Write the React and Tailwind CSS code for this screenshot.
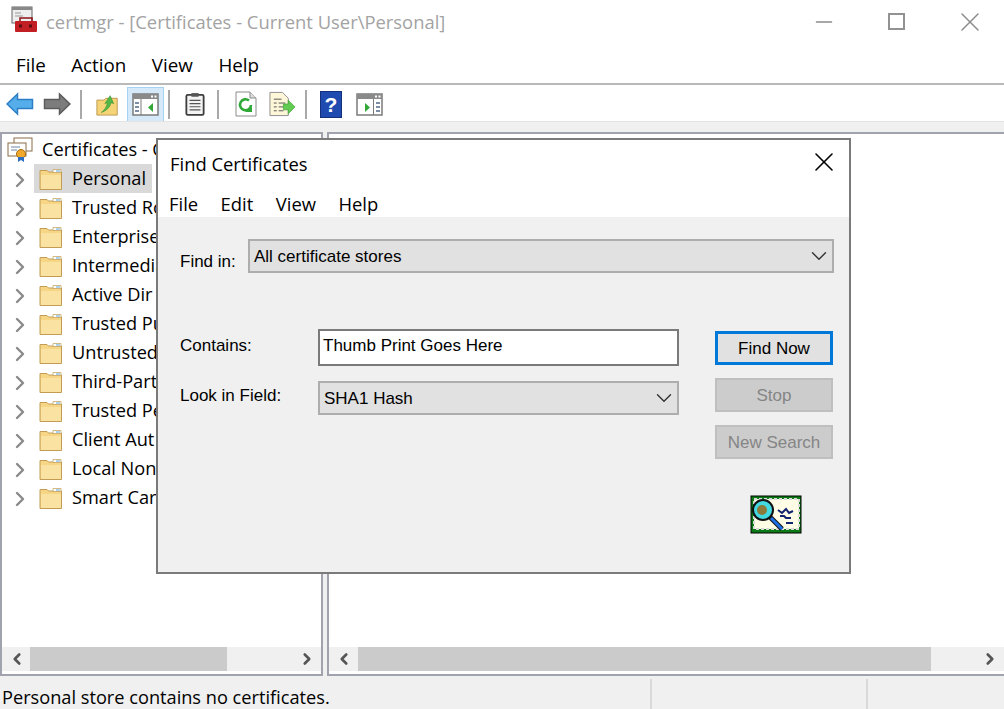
import React from "react";
import { ChevronRight, ChevronLeft, ChevronDown, X, Minus } from "lucide-react";

const uiFont = "font-['Open_Sans','Noto_Sans',sans-serif]";
const dlgFont = "font-['Liberation_Sans',Arial,sans-serif]";

const stores = ["Personal", "Trusted Ro", "Enterprise", "Intermedia", "Active Dir", "Trusted Pu", "Untrusted", "Third-Part", "Trusted Pe", "Client Aut", "Local Non", "Smart Car"];

function Folder() {
  return (
    <svg width="24" height="24" viewBox="0 0 24 24" className="shrink-0">
      <path d="M1 3.500h7l1.500 1.500H22.500v17.500H1z" fill="#f6d685" stroke="#c29c55" />
      <path d="M2 8h20v14H2z" fill="#fae3a2" />
      <path d="M14 2.500h8v3h-8z" fill="#fff" stroke="#c29c55" strokeWidth=".7" />
      <path d="M17 3.500h4v1h-4z" fill="#5aa7d8" />
    </svg>
  );
}

function Sep() {
  return <div className="w-[2px] h-[29px] bg-[#a9a9a9] mx-[1px]" />;
}

function ArrowLeft({ fill, stroke }) {
  return (
    <svg width="28" height="24" viewBox="0 0 28 24">
      <path d="M1 12 11.500 2v5.500H26.500v9H11.500V22z" fill={fill} stroke={stroke} strokeWidth="1.500" />
    </svg>
  );
}

function ArrowRight({ fill, stroke }) {
  return (
    <svg width="28" height="24" viewBox="0 0 28 24">
      <path d="M27 12 16.500 2v5.500H1.500v9H16.500V22z" fill={fill} stroke={stroke} strokeWidth="1.500" />
    </svg>
  );
}

function WindowPaneIcon({ flip }) {
  return (
    <svg width="27" height="24" viewBox="0 0 27 24">
      <rect x="1" y="2" width="25" height="21" fill="#fff" stroke="#7b7b7b" strokeWidth="1.500" />
      <rect x="1" y="2" width="25" height="5" fill="#8a8a8a" />
      <path d="M19 3.500h2v2h-2zM22.500 3.500h2v2h-2z" fill="#fff" />
      {flip ? (
        <>
          <path d="M17.500 7v16" stroke="#7b7b7b" />
          <path d="M9 11v9l5-4.500z" fill="#31a838" />
          <path d="M20 11h4M20 15h4M20 19h4" stroke="#7b8ea5" strokeWidth="2" />
        </>
      ) : (
        <>
          <path d="M9 7v16" stroke="#7b7b7b" />
          <path d="M21 11v9l-5-4.500z" fill="#31a838" />
          <path d="M3 11h4M3 15h4M3 19h4" stroke="#7b8ea5" strokeWidth="2" />
        </>
      )}
    </svg>
  );
}

function Toolbar() {
  return (
    <div className="flex items-center h-[36px] pl-[6px] pt-[2px] bg-white">
      <div className="w-[28px] flex justify-center"><ArrowLeft fill="#55aeea" stroke="#2c7fc4" /></div>
      <div className="w-[28px] ml-[9px] flex justify-center"><ArrowRight fill="#7c7c7c" stroke="#5c5c5c" /></div>
      <div className="ml-[8px]"><Sep /></div>
      <svg width="23" height="25" viewBox="0 0 26 26" className="ml-[13px]">
        <path d="M1 8h8l2-2h13v19H1z" fill="#f5d477" stroke="#b8924a" />
        <path d="M6 22c3-2 6-6 7-11l-3 1 6-9 4 9-3-1c-1 5-5 9-11 11z" fill="#52b848" stroke="#2f8c2b" strokeWidth=".6" />
      </svg>
      <div className="ml-[8px] w-[37px] h-[35px] flex items-center justify-center bg-[#d5e9f9] border border-[#a5d2f3]">
        <WindowPaneIcon />
      </div>
      <div className="ml-[3px]"><Sep /></div>
      <svg width="20" height="26" viewBox="0 0 22 26" className="ml-[14px]">
        <rect x="1.500" y="3" width="19" height="22" rx="1.500" fill="#f4f4f4" stroke="#3e3e3e" strokeWidth="2" />
        <rect x="7" y="1" width="8" height="4" fill="#555" />
        <path d="M5 9h12M5 12.500h12M5 16h12M5 19.500h12" stroke="#555" strokeWidth="1.300" />
      </svg>
      <div className="ml-[11px]"><Sep /></div>
      <svg width="22" height="26" viewBox="0 0 22 26" className="ml-[15px]">
        <path d="M1 1h14l6 6v18H1z" fill="#fff" stroke="#8c8c8c" />
        <path d="M15 1v6h6" fill="#ddd" stroke="#8c8c8c" />
        <path d="M16 14a5.500 5.500 0 1 1-2-4.500" fill="none" stroke="#2ea836" strokeWidth="2.600" />
        <path d="M10 21h7v-5z" fill="#2ea836" />
      </svg>
      <svg width="27" height="26" viewBox="0 0 28 26" className="ml-[12px]">
        <path d="M1 1h13l6 6v18H1z" fill="#fdf6d8" stroke="#8c8c8c" />
        <path d="M5 8h8M5 12h3M10 12h7M5 16h3M10 16h5M5 20h3M10 20h5" stroke="#555" />
        <path d="M15 13h5V9l7 7-7 7v-4h-5z" fill="#62cc52" stroke="#3da332" strokeWidth=".7" />
      </svg>
      <div className="ml-[8px]"><Sep /></div>
      <svg width="22" height="27" viewBox="0 0 22 27" className="ml-[12px]">
        <rect x="0.500" y="0.500" width="21" height="26" fill="#1f4bb0" stroke="#15307a" />
        <text x="11" y="21" textAnchor="middle" fontSize="21" fontWeight="700" fill="#fff" fontFamily="Liberation Sans">?</text>
      </svg>
      <div className="ml-[14px]"><WindowPaneIcon flip /></div>
    </div>
  );
}

function ScrollBar({ thumbLeft, thumbWidth }) {
  return (
    <div className="flex items-center h-[24px] bg-[#f0f0f0] relative">
      <ChevronLeft size={18} strokeWidth={3.500} className="text-[#555] ml-[6px] shrink-0" />
      <div style={{ marginLeft: thumbLeft, width: thumbWidth }} className="h-full bg-[#cbcbcb]" />
      <ChevronRight size={18} strokeWidth={3.500} className="text-[#555] ml-auto mr-[5px] shrink-0" />
    </div>
  );
}

function CertBadge() {
  return (
    <svg width="52" height="39" viewBox="0 0 52 39">
      <rect x="1" y="1" width="50" height="37" fill="#0b7a16" stroke="#000" strokeWidth="1" />
      <rect x="4" y="4" width="45" height="30" fill="#fffde6" stroke="#d8d8d8" strokeWidth="2" strokeDasharray="3 2" />
      <path d="M28 15l4 3 4-4 3 4 4-2M30 21h4l2 2h5M36 28h7" stroke="#12236f" strokeWidth="2" fill="none" />
      <circle cx="13" cy="15" r="10" fill="#42d9e3" stroke="#111" strokeWidth="2" />
      <circle cx="12" cy="15" r="5" fill="#8a7a3b" />
      <path d="M20 22l12 12" stroke="#111" strokeWidth="5" />
      <path d="M21 23l11 11" stroke="#1c6fe6" strokeWidth="3" />
    </svg>
  );
}

function DialogButton({ children, primary }) {
  return (
    <div
      className={`h-[34px] flex items-center justify-center pt-[2px] text-[17px] ${
        primary
          ? "bg-[#e1e1e1] border-[3px] border-[#0078d7] text-black"
          : "bg-[#cccccc] border-2 border-[#bfbfbf] text-[#858585]"
      }`}
    >
      {children}
    </div>
  );
}

function FindDialog() {
  return (
    <div className="absolute left-[156px] top-[138px] w-[695px] h-[436px] bg-white border-2 border-[#7a7a7a] flex flex-col text-black">
      <div className={`flex items-center justify-between h-[48px] pl-[12px] pr-[9px] text-[18.400px] ${uiFont}`}>
        <span>Find Certificates</span>
        <X size={32} strokeWidth={1.200} className="mt-[-4px]" />
      </div>
      <div className={`flex items-center gap-[22.500px] h-[30px] pt-[2px] pl-[11px] text-[18.400px] ${uiFont}`}>
        <span>File</span>
        <span>Edit</span>
        <span>View</span>
        <span>Help</span>
      </div>
      <div className={`flex-1 bg-[#f0f0f0] mt-[-1px] pl-[22px] pr-[16px] pt-[21px] ${dlgFont} text-[17px]`}>
        <div className="flex items-center">
          <span className="w-[68px] pt-[11px]">Find in:</span>
          <div className="flex-1 h-[34px] mr-[-1px] flex items-center justify-between pl-[4px] bg-[#e1e1e1] border-2 border-[#adadad]">
            <span>All certificate stores</span>
            <ChevronDown size={26} strokeWidth={1.300} className="text-[#333]" />
          </div>
        </div>
        <div className="flex mt-[54px]">
          <div className="w-[499px] shrink-0">
            <div className="flex items-center">
              <span className="w-[138px] mb-[3px]">Contains:</span>
              <div className="w-[361px] h-[37px] flex items-center pl-[3px] bg-white border-2 border-[#7a7a7a]">
                <span className="mb-[2px]">Thumb Print Goes Here</span>
              </div>
            </div>
            <div className="flex items-center mt-[15px]">
              <span className="w-[138px] mb-[3px]">Look in Field:</span>
              <div className="w-[361px] h-[34px] flex items-center justify-between pl-[4px] bg-[#e1e1e1] border-2 border-[#adadad]">
                <span className="pt-[2px]">SHA1 Hash</span>
                <ChevronDown size={26} strokeWidth={1.300} className="text-[#333]" />
              </div>
            </div>
          </div>
          <div className="w-[118px] shrink-0 ml-[36px] flex flex-col gap-[13px] mt-[2px]">
            <DialogButton primary>Find Now</DialogButton>
            <DialogButton>Stop</DialogButton>
            <DialogButton>New Search</DialogButton>
            <div className="flex justify-center mt-[23px] pl-[4px]"><CertBadge /></div>
          </div>
        </div>
      </div>
    </div>
  );
}

export default function App() {
  return (
    <div className={`relative w-[1004px] h-[709px] overflow-hidden bg-[#f0f0f0] flex flex-col ${uiFont} text-[18.200px] text-black`}>
      <div className="flex items-center h-[43px] bg-white relative">
        <svg width="27" height="27" viewBox="0 0 27 27" className="ml-[11px] mt-[-5px] shrink-0">
          <rect x="1" y="1" width="20" height="16" fill="#eee" stroke="#666" />
          <rect x="1" y="1" width="20" height="3" fill="#888" />
          <path d="M4 7h6M4 10h8" stroke="#999" />
          <rect x="4" y="15" width="22" height="11" rx="1" fill="#c21f24" />
          <path d="M9 15v-3h12v3" fill="none" stroke="#8e1116" strokeWidth="1.500" />
          <path d="M8 20h3M18 20h3" stroke="#5a0d0e" strokeWidth="3" />
        </svg>
        <span className="ml-[8px] text-[18.400px] text-[#a3a3a3]">certmgr - [Certificates - Current User\Personal]</span>
        <div className="ml-auto flex items-center text-[#8c8c8c]">
          <Minus size={26} strokeWidth={1.200} />
          <div className="ml-[51px] w-[17px] h-[17px] border-2 border-[#929292]" />
          <X size={32} strokeWidth={1.100} className="ml-[49px] mr-[18px]" />
        </div>
      </div>
      <div className="flex items-center gap-[25.500px] h-[36px] pt-[4px] pl-[16px] bg-white border-b-2 border-[#b9b9b9] box-content text-[18.800px]">
        <span>File</span>
        <span>Action</span>
        <span>View</span>
        <span>Help</span>
      </div>
      <Toolbar />
      <div className="h-[11px] bg-[#f0f0f0] border-t border-[#e3e3e3] box-border" />
      <div className="flex flex-1 gap-[4px] bg-[#f0f0f0] min-h-0">
        <div className="w-[323px] border-2 border-[#a0a3ad] bg-white flex flex-col">
          <div className="flex-1 min-h-0 pt-[2px]">
            <div className="flex items-center h-[28px] pl-[5px]">
              <svg width="26" height="26" viewBox="0 0 26 26" className="shrink-0">
                <rect x="7" y="1" width="18" height="13" fill="#fff" stroke="#8a6d46" />
                <rect x="1" y="6" width="18" height="13" fill="#fff" stroke="#8a6d46" />
                <path d="M4 10h9M4 13h6" stroke="#6d86a8" />
                <circle cx="14" cy="17" r="4.500" fill="#f0a92a" stroke="#a86e12" />
                <path d="M11 20v5l3-2 3 2v-5" fill="#2b6cc4" />
              </svg>
              <span className="ml-[9px]">Certificates - Current User</span>
            </div>
            {stores.map((name, i) => (
              <div key={name} className="flex items-center h-[29px] pl-[6px]">
                <ChevronRight size={24} strokeWidth={2.400} className="text-[#8a8a8a] shrink-0 mt-[2px]" />
                <div className={`flex items-center h-[29px] ml-[2px] pl-[5px] pr-[6px] ${i === 0 ? "bg-[#d9d9d9]" : ""}`}>
                  <Folder />
                  <span className="ml-[9px]">{name}</span>
                </div>
              </div>
            ))}
          </div>
          <div className="mb-[3px]">
            <ScrollBar thumbLeft={4} thumbWidth={197} />
          </div>
        </div>
        <div className="flex-1 border-y-2 border-l-2 border-[#a0a3ad] bg-white flex flex-col justify-end">
          <div className="mb-[3px]">
            <ScrollBar thumbLeft={5} thumbWidth={573} />
          </div>
        </div>
      </div>
      <div className="flex h-[33px] bg-[#f0f0f0] shrink-0 pt-[3px]">
        <span className="w-[652px] pl-[2px] pt-[7px] h-full flex items-center border-r-2 border-[#d9d9d9]">Personal store contains no certificates.</span>
        <span className="w-[216px] h-full border-r-2 border-[#d9d9d9]" />
      </div>
      <FindDialog />
    </div>
  );
}
